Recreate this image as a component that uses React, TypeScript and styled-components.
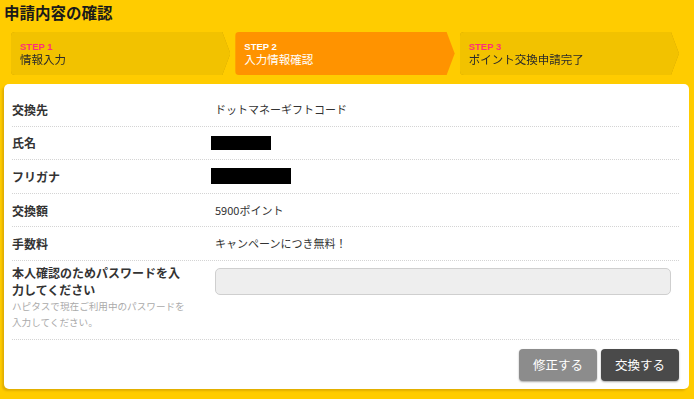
import React from "react"
import styled, { createGlobalStyle } from "styled-components"

const GlobalStyle = createGlobalStyle`
  html, body {
    margin: 0;
    padding: 0;
    background: #ffcc00;
  }
  body {
    font-family: "Noto Sans CJK JP", "Liberation Sans", sans-serif;
    color: #333;
  }
  * {
    box-sizing: border-box;
  }
`

const Page = styled.div`
  min-height: 100vh;
  padding: 2px 5px 10px 4px;
  background: #ffcc00;
`

const Title = styled.h1`
  margin: 0;
  font-size: 15.5px;
  line-height: 20px;
  font-weight: 700;
  color: #1a1a1a;
`

const Steps = styled.div`
  display: flex;
  gap: 5px;
  height: 43px;
  margin: 10px 10px 0 7px;
`

const Step = styled.div<{ $active?: boolean }>`
  flex: 1;
  filter: ${(p) =>
    p.$active ? "none" : "drop-shadow(0 0 0.6px rgba(150, 110, 0, 0.55))"};
`

const StepShape = styled.div<{ $active?: boolean }>`
  height: 100%;
  padding-left: 9px;
  display: flex;
  flex-direction: column;
  justify-content: center;
  border-radius: 4px;
  background: ${(p) => (p.$active ? "#ff9300" : "#f2c200")};
  clip-path: polygon(
    0 0,
    calc(100% - 8px) 0,
    100% 50%,
    calc(100% - 8px) 100%,
    0 100%
  );
`

const StepNo = styled.div<{ $active?: boolean }>`
  font-family: "Liberation Sans", Arial, sans-serif;
  font-size: 9.5px;
  font-weight: 700;
  line-height: 11px;
  color: ${(p) => (p.$active ? "#fff" : "#ff2e7a")};
`

const StepName = styled.div<{ $active?: boolean }>`
  font-size: 11.5px;
  line-height: 15px;
  color: ${(p) => (p.$active ? "#fff" : "#2a2a2a")};
`

const Card = styled.div`
  margin-top: 9px;
  background: #fff;
  border-radius: 5px;
  padding: 9px 10px 8px 8px;
  box-shadow: -2px 2px 2px rgba(190, 140, 0, 0.45);
`

const Row = styled.div<{ $tall?: boolean }>`
  display: grid;
  grid-template-columns: 203px 1fr;
  align-items: ${(p) => (p.$tall ? "start" : "center")};
  min-height: 33.6px;
  padding: ${(p) => (p.$tall ? "3px 0 8px" : "0")};
  border-bottom: 1px dotted #d4d4d4;
`

const Label = styled.div`
  width: 176px;
  font-size: 12px;
  font-weight: 700;
  line-height: 17px;
  color: #333;
`

const Help = styled.div`
  font-size: 9.6px;
  font-weight: 400;
  line-height: 16.5px;
  color: #aaa;
`

const Value = styled.div`
  font-size: 11px;
  line-height: 15px;
  color: #333;
`

const Redacted = styled.span<{ $w: number; $h: number }>`
  display: block;
  margin-left: -4px;
  width: ${(p) => p.$w}px;
  height: ${(p) => p.$h}px;
  background: #000;
`

const PasswordInput = styled.input`
  display: block;
  width: calc(100% - 8px);
  height: 27px;
  margin-top: 4px;
  padding: 0 6px;
  border: 1px solid #cfcfcf;
  border-radius: 5px;
  background: #eeeeee;
  font-size: 12px;
  outline: none;
`

const Actions = styled.div`
  display: flex;
  justify-content: flex-end;
  gap: 4px;
  padding-top: 9px;
`

const Button = styled.button<{ $dark?: boolean }>`
  width: 78px;
  height: 32px;
  border: none;
  border-radius: 4px;
  background: ${(p) => (p.$dark ? "#4a4a4a" : "#8c8c8c")};
  color: #fff;
  font-family: "Noto Sans CJK JP", sans-serif;
  font-size: 12.5px;
  box-shadow: 0 1px 2px rgba(0, 0, 0, 0.35);
  cursor: pointer;
`

const steps = [
  { no: "STEP 1", name: "情報入力" },
  { no: "STEP 2", name: "入力情報確認", active: true },
  { no: "STEP 3", name: "ポイント交換申請完了" },
]

export default function App() {
  return (
    <>
      <GlobalStyle />
      <Page>
        <Title>申請内容の確認</Title>
        <Steps>
          {steps.map((s) => (
            <Step key={s.no} $active={s.active}>
              <StepShape $active={s.active}>
                <StepNo $active={s.active}>{s.no}</StepNo>
                <StepName $active={s.active}>{s.name}</StepName>
              </StepShape>
            </Step>
          ))}
        </Steps>
        <Card>
          <Row>
            <Label>交換先</Label>
            <Value>ドットマネーギフトコード</Value>
          </Row>
          <Row>
            <Label>氏名</Label>
            <Value>
              <Redacted $w={60} $h={14} />
            </Value>
          </Row>
          <Row>
            <Label>フリガナ</Label>
            <Value>
              <Redacted $w={80} $h={16} />
            </Value>
          </Row>
          <Row>
            <Label>交換額</Label>
            <Value>5900ポイント</Value>
          </Row>
          <Row>
            <Label>手数料</Label>
            <Value>キャンペーンにつき無料！</Value>
          </Row>
          <Row $tall>
            <Label>
              本人確認のためパスワードを入力してください
              <Help>ハピタスで現在ご利用中のパスワードを入力してください。</Help>
            </Label>
            <Value>
              <PasswordInput type="password" autoFocus />
            </Value>
          </Row>
          <Actions>
            <Button>修正する</Button>
            <Button $dark>交換する</Button>
          </Actions>
        </Card>
      </Page>
    </>
  )
}
